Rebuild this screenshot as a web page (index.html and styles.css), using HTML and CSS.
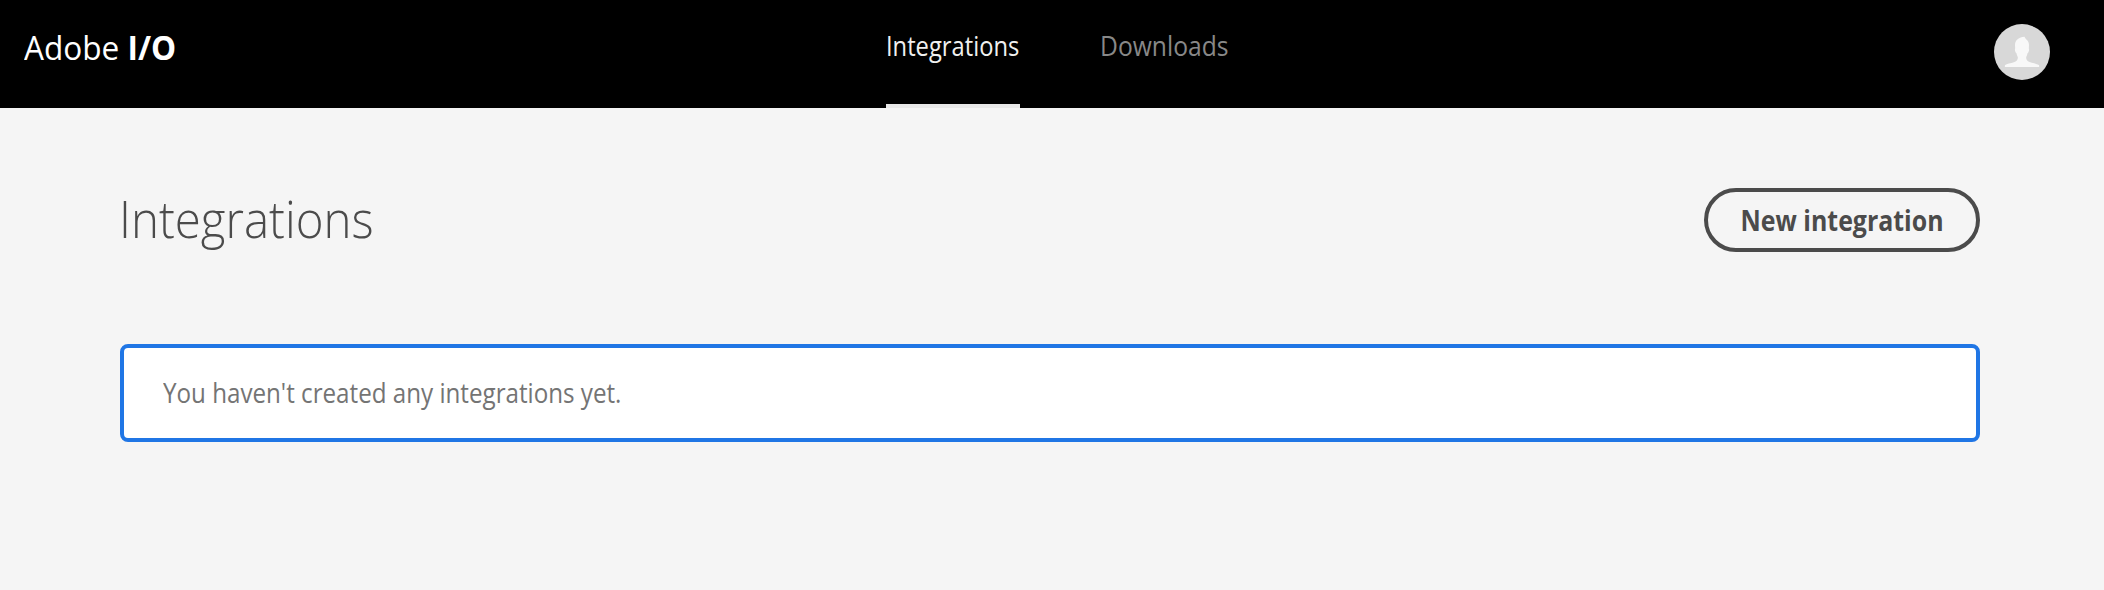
FILE: index.html
```html
<!DOCTYPE html>
<html lang="en">
<head>
<meta charset="utf-8">
<title>Adobe I/O - Integrations</title>
<link rel="stylesheet" href="styles.css">
</head>
<body>
<header class="topbar">
  <div class="logo"><span class="logo-text">Adobe <span class="logo-io">I/O</span></span></div>
  <nav class="nav">
    <a class="nav-item active"><span class="nav-label">Integrations</span></a>
    <a class="nav-item downloads"><span class="nav-label">Downloads</span></a>
  </nav>
  <svg class="avatar" viewBox="0 0 56 56" aria-label="User profile">
    <circle cx="28" cy="28" r="28" fill="#d8d8d8"/>
    <path fill="#f8f8f8" d="M30.500 12.800C25 13 21 16.300 21 21C21 22.800 21.300 24 21 25C20.700 26.500 21.500 28.500 22.500 29.300C22.800 31 23.400 32.200 23.800 33.200C24 35.500 23 37 20.500 37.900C16.500 39.300 12.500 39.800 11.200 41C10.700 41.600 10.700 43 11.200 43H44.800C45.300 43 45.300 41.600 44.800 41C43.500 39.800 39.500 39.300 35.500 37.900C33 37 32 35.500 32.200 33.200C32.600 32.200 33.200 31 33.500 29.300C34.500 28.500 35.300 26.500 35 25C34.700 24 35 22.800 35 21C35 18 33.500 16.500 32.300 15.500C31.500 14.700 31.200 13.700 30.500 12.800Z"/>
  </svg>
</header>
<main class="page">
  <div class="page-head">
    <h1 class="title">Integrations</h1>
    <button class="new-button"><span class="button-label">New integration</span></button>
  </div>
  <section class="notice"><span class="notice-text">You haven't created any integrations yet.</span></section>
</main>
</body>
</html>
```
FILE: styles.css
```css
* { box-sizing: border-box; }
body {
  margin: 0;
  min-height: 590px;
  background: #f5f5f5;
  font-family: "Open Sans", "Noto Sans", sans-serif;
}
.topbar {
  display: grid;
  grid-template-columns: 886px 1fr 56px;
  height: 108px;
  padding-right: 54px;
  background: #000;
}
.logo {
  padding: 23px 0 0 24px;
  color: #fff;
  font-size: 33.6px;
  line-height: 48px;
  white-space: nowrap;
}
.logo-io { font-weight: 700; }
.nav { display: flex; gap: 80px; }
.nav-item {
  width: 134px;
  height: 108px;
  padding-top: 26px;
  font-size: 26.5px;
  line-height: 40px;
  color: #888;
  white-space: nowrap;
}
.active {
  color: #f0f0f0;
  border-bottom: 4px solid #e8e8e8;
}
.logo-text, .nav-label, .title, .button-label, .notice-text {
  display: inline-block;
  transform: scaleX(0.912);
  transform-origin: left;
}
.logo-text { transform: scaleX(0.94); }
.nav-label { transform: scaleX(0.895); }
.downloads .nav-label { transform: scaleX(0.93); }
.button-label {
  transform: scaleX(0.89);
  transform-origin: center;
}
.avatar { width: 56px; height: 56px; margin-top: 24px; }
.page { padding: 80px 124px 0 120px; }
.page-head {
  display: flex;
  justify-content: space-between;
  height: 64px;
}
.title {
  margin: 0 0 0 -1px;
  color: #4b4b4b;
  font-size: 52px;
  font-weight: 300;
  line-height: 60px;
}
.new-button {
  width: 276px;
  height: 64px;
  padding: 0 0 1px;
  border: 4px solid #4b4b4b;
  border-radius: 32px;
  background: transparent;
  color: #4b4b4b;
  font: inherit;
  font-size: 28px;
  font-weight: 700;
  white-space: nowrap;
}
.notice {
  height: 98px;
  margin-top: 92px;
  padding: 25px 39px;
  border: 4px solid #2076e5;
  border-radius: 8px;
  background: #fff;
  color: #747474;
  font-size: 26.5px;
  line-height: 40px;
}
```
